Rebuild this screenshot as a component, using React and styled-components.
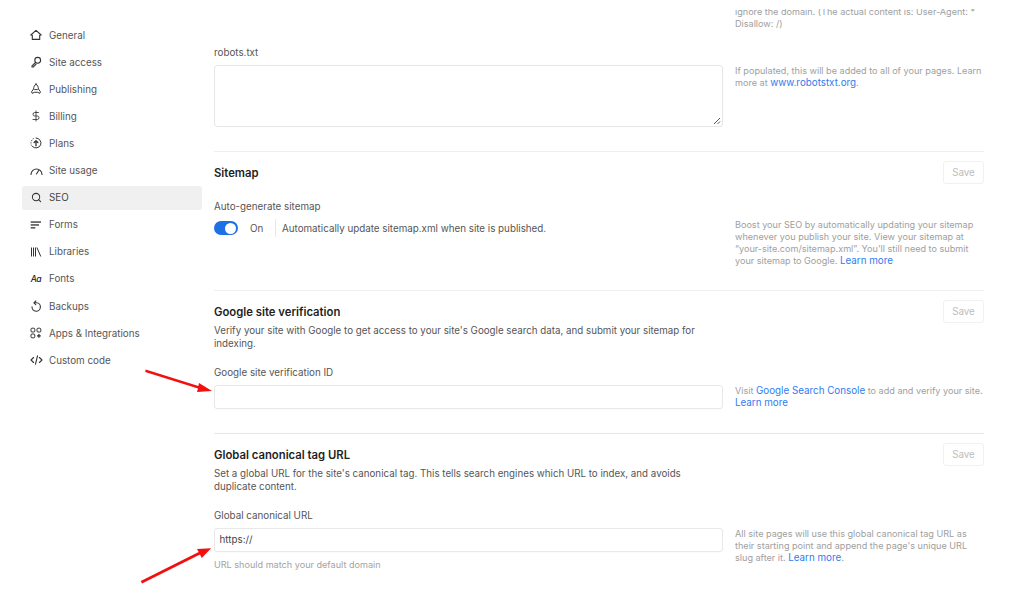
import React from 'react';
import styled, { createGlobalStyle } from 'styled-components';
import { DollarSign, Search } from 'lucide-react';

const GlobalStyle = createGlobalStyle`
  html, body {
    margin: 0;
    padding: 0;
    background: #fff;
  }
  body {
    font-family: Inter, "Liberation Sans", sans-serif;
    font-size: 9.8px;
    color: #4a4a4a;
  }
`;

const Page = styled.div`
  position: relative;
  width: 1012px;
  height: 610px;
  overflow: hidden;
  display: flex;
  background: #fff;
`;

const Sidebar = styled.nav`
  width: 180px;
  margin-left: 22px;
  padding-top: 23px;
  display: flex;
  flex-direction: column;
  gap: 3.12px;
  flex-shrink: 0;
`;

const NavItem = styled.div`
  height: 24px;
  display: flex;
  align-items: center;
  gap: 8px;
  padding-left: 9px;
  border-radius: 3px;
  color: ${props => (props.$active ? '#444' : '#555')};
  background: ${props => (props.$active ? '#f0f0f0' : 'transparent')};
`;

const NavIcon = styled.span`
  width: 10px;
  height: 12px;
  display: flex;
  align-items: center;
  justify-content: center;
  color: #333;

  svg {
    flex-shrink: 0;
  }
`;

const FontGlyph = styled.span`
  font-size: 8.6px;
  font-weight: 500;
  font-style: italic;
  letter-spacing: -0.5px;
  color: #222;
  white-space: nowrap;
`;

const Main = styled.main`
  margin-left: 12px;
  width: 770px;
  padding-top: 9px;
  display: flex;
  flex-direction: column;
`;

const Section = styled.section`
  padding-bottom: ${props => props.$bottom || 23.5}px;
  border-bottom: 1px solid ${props => props.$line || '#efefef'};

  &:last-child {
    border-bottom: none;
  }
`;

const TitleRow = styled.div`
  display: flex;
  justify-content: space-between;
  align-items: flex-start;
  height: 23.5px;
  margin-top: 9px;
`;

const Title = styled.h2`
  margin: 0;
  font-size: 11.3px;
  line-height: 25px;
  font-weight: 600;
  color: #1f1f1f;
`;

const SaveButton = styled.button`
  width: 41px;
  height: 23.5px;
  padding: 0;
  background: #fff;
  border: 1px solid #f1f1f1;
  border-radius: 3px;
  font: inherit;
  color: #bdbdbd;
`;

const Description = styled.p`
  width: 490px;
  margin: 1px 0 0;
  font-size: 9.75px;
  line-height: 13.3px;
  color: #555;
`;

const FieldRow = styled.div`
  display: grid;
  grid-template-columns: 509px 249px;
  column-gap: 12px;
  margin-top: ${props => props.$top || 15}px;
`;

const Label = styled.div`
  line-height: 13px;
  margin-bottom: 6.5px;
  color: #555;
`;

const Note = styled.p`
  margin: 19px 0 0;
  line-height: 12px;
  color: #a0a0a0;
  font-size: 9.1px;
`;

const ClippedNote = styled.div`
  height: 21px;
  margin-left: 521px;
  width: 249px;
  overflow: hidden;
  display: flex;
  flex-direction: column;
  justify-content: flex-end;
  line-height: 12px;
  color: #a0a0a0;
  font-size: 9.1px;
  white-space: nowrap;
`;

const Link = styled.a`
  color: #2f7bf0;
  font-size: 9.8px;
`;

const TextArea = styled.div`
  position: relative;
  height: 62px;
  box-sizing: border-box;
  border: 1px solid #e6e6e6;
  border-radius: 3px;
`;

const ResizeGrip = styled.svg`
  position: absolute;
  right: 1px;
  bottom: 1px;
`;

const Input = styled.div`
  height: 24px;
  box-sizing: border-box;
  border: 1px solid #e8e8e8;
  border-radius: 3px;
  padding-left: 4.5px;
  line-height: 22px;
  color: #444;
  box-shadow: 0 1px 1px rgba(0, 0, 0, 0.02);
`;

const Helper = styled.div`
  margin-top: 7px;
  line-height: 12px;
  font-size: 9.1px;
  color: #a3a3a3;
`;

const ToggleRow = styled.div`
  display: flex;
  align-items: center;
  height: 18px;
`;

const Switch = styled.div`
  width: 24px;
  height: 14px;
  border-radius: 7px;
  background: #1f6fe5;
  display: flex;
  align-items: center;
  justify-content: flex-end;
  padding-right: 2px;
  box-sizing: border-box;
`;

const Knob = styled.div`
  width: 11px;
  height: 11px;
  border-radius: 50%;
  background: #fff;
`;

const ToggleState = styled.span`
  width: 25px;
  margin-left: 12px;
  color: #555;
`;

const ToggleText = styled.span`
  height: 18px;
  line-height: 20px;
  padding-left: 6px;
  border-left: 1px solid #e8e8e8;
  color: #555;
`;

const Arrow = styled.svg`
  position: absolute;
  left: 0;
  top: 0;
  pointer-events: none;
`;

const HomeIcon = () => (
  <svg width="12" height="12" viewBox="0 0 12 12" fill="none" stroke="currentColor" strokeWidth="1.1" strokeLinejoin="round">
    <path d="M.8 6 6 1.4 11.200 6 9.700 6.300V10.400H2.300V6.300z" />
  </svg>
);

const KeyIcon = () => (
  <svg width="12" height="12" viewBox="0 0 12 12" fill="none" stroke="currentColor" strokeWidth="1.1" strokeLinecap="round" strokeLinejoin="round">
    <circle cx="7.700" cy="4.300" r="2.900" />
    <path d="M5.500 6.300 2 9.800V11h1.600l.3-1.200 1.100-.2.200-1.100 1-.4" />
  </svg>
);

const RocketIcon = () => (
  <svg width="12" height="12" viewBox="0 0 12 12" fill="none" stroke="currentColor" strokeWidth="1" strokeLinejoin="round" strokeLinecap="round">
    <path d="M6 1c1.600 1.300 2.400 3 2.400 5l2 2.700-.6 1.700-2.100-1.100H4.300l-2.100 1.100-.6-1.700 2-2.700c0-2 .8-3.700 2.400-5z" />
    <path d="M4.700 6.600h2.600" />
  </svg>
);

const PlansIcon = () => (
  <svg width="12" height="12" viewBox="0 0 12 12" fill="none" stroke="currentColor" strokeWidth="1" strokeLinecap="round" strokeLinejoin="round">
    <path d="M6 1a5 5 0 1 1-3.500 8.600" />
    <path d="M1 6v-.3M1.500 3.800l.2-.3M3 1.900l.3-.2M1.300 8l.1.200" />
    <path d="M6 8.800V3.700M4.100 5.500 6 3.600l1.900 1.900" strokeWidth="1.300" />
  </svg>
);

const GaugeIcon = () => (
  <svg width="13" height="12" viewBox="0 0 13 12" fill="none" stroke="currentColor" strokeWidth="1.100" strokeLinecap="round">
    <path d="M1 9.500a5.500 5.500 0 0 1 11 0" />
    <path d="M6.500 9 8.800 5.200" />
  </svg>
);

const FormsIcon = () => (
  <svg width="12" height="12" viewBox="0 0 12 12" fill="#333">
    <rect x=".7" y="2.400" width="10.300" height="1.300" />
    <rect x=".7" y="5.300" width="8.300" height="1.300" />
    <rect x=".7" y="8.200" width="4.600" height="1.300" />
  </svg>
);

const LibraryIcon = () => (
  <svg width="12" height="12" viewBox="0 0 12 12" fill="none" stroke="currentColor" strokeWidth="1">
    <path d="M1.500 1.500v9M3.500 1.500v9M5.500 1.500v9M6.900 1.500l3.900 9" />
  </svg>
);

const BackupIcon = () => (
  <svg width="12" height="12" viewBox="0 0 12 12" fill="none" stroke="currentColor" strokeWidth="1.100" strokeLinecap="round" strokeLinejoin="round">
    <path d="M4.200 2.800H6.500a4.200 4.200 0 1 1-4.500 4" />
    <path d="M5.800 1 4 2.800l1.800 1.800" />
  </svg>
);

const AppsIcon = () => (
  <svg width="12" height="12" viewBox="0 0 12 12" fill="none" stroke="currentColor" strokeWidth="1">
    <rect x="1" y="1.200" width="3.800" height="3.800" rx="1" />
    <rect x="7" y="1.200" width="3.800" height="3.800" rx="1" />
    <rect x="1" y="7" width="3.800" height="3.800" rx="1" />
    <path d="M8.900 7v3.800M7 8.900h3.800" strokeWidth="1.300" />
  </svg>
);

const CodeIcon = () => (
  <svg width="13" height="12" viewBox="0 0 13 12" fill="none" stroke="currentColor" strokeWidth="1.100" strokeLinecap="round" strokeLinejoin="round">
    <path d="M3.600 3.500 1 6l2.600 2.500M9.400 3.500 12 6 9.400 8.500M7.500 1.800 5.500 10.200" />
  </svg>
);

const navItems = [
  { name: 'General', icon: <HomeIcon /> },
  { name: 'Site access', icon: <KeyIcon /> },
  { name: 'Publishing', icon: <RocketIcon /> },
  { name: 'Billing', icon: <DollarSign size={12} strokeWidth={1.7} /> },
  { name: 'Plans', icon: <PlansIcon /> },
  { name: 'Site usage', icon: <GaugeIcon /> },
  { name: 'SEO', icon: <Search size={11} strokeWidth={2.2} />, active: true },
  { name: 'Forms', icon: <FormsIcon /> },
  { name: 'Libraries', icon: <LibraryIcon /> },
  { name: 'Fonts', icon: <FontGlyph>Aa</FontGlyph> },
  { name: 'Backups', icon: <BackupIcon /> },
  { name: 'Apps & Integrations', icon: <AppsIcon /> },
  { name: 'Custom code', icon: <CodeIcon /> },
];

const App = () => (
  <Page>
    <GlobalStyle />
    <Sidebar>
      {navItems.map(item => (
        <NavItem key={item.name} $active={item.active}>
          <NavIcon>{item.icon}</NavIcon>
          {item.name}
        </NavItem>
      ))}
    </Sidebar>

    <Main>
      <ClippedNote>
        <span>ignore the domain. (The actual content is: User-Agent: *</span>
        <span>Disallow: /)</span>
      </ClippedNote>

      <Section>
        <FieldRow $top={15.5}>
          <div>
            <Label>robots.txt</Label>
            <TextArea>
              <ResizeGrip width="8" height="8" viewBox="0 0 8 8" stroke="#444" strokeWidth="0.9">
                <path d="M1 7 7 1M4.500 7 7 4.500" />
              </ResizeGrip>
            </TextArea>
          </div>
          <Note>
            If populated, this will be added to all of your pages. Learn more at{' '}
            <Link>www.robotstxt.org</Link>.
          </Note>
        </FieldRow>
      </Section>

      <Section $bottom={23}>
        <TitleRow>
          <Title>Sitemap</Title>
          <SaveButton>Save</SaveButton>
        </TitleRow>
        <FieldRow $top={15.5}>
          <div>
            <Label>Auto-generate sitemap</Label>
            <ToggleRow>
              <Switch><Knob /></Switch>
              <ToggleState>On</ToggleState>
              <ToggleText>Automatically update sitemap.xml when site is published.</ToggleText>
            </ToggleRow>
          </div>
          <Note>
            Boost your SEO by automatically updating your sitemap whenever you publish your site. View your sitemap at
            “your-site.com/sitemap.xml”. You'll still need to submit your sitemap to Google. <Link>Learn more</Link>
          </Note>
        </FieldRow>
      </Section>

      <Section $line="#e6e6e6">
        <TitleRow>
          <Title>Google site verification</Title>
          <SaveButton>Save</SaveButton>
        </TitleRow>
        <Description>
          Verify your site with Google to get access to your site's Google search data, and submit your sitemap for indexing.
        </Description>
        <FieldRow>
          <div>
            <Label>Google site verification ID</Label>
            <Input />
          </div>
          <Note>
            Visit <Link>Google Search Console</Link> to add and verify your site. <Link>Learn more</Link>
          </Note>
        </FieldRow>
      </Section>

      <Section>
        <TitleRow>
          <Title>Global canonical tag URL</Title>
          <SaveButton>Save</SaveButton>
        </TitleRow>
        <Description>
          Set a global URL for the site's canonical tag. This tells search engines which URL to index, and avoids duplicate content.
        </Description>
        <FieldRow>
          <div>
            <Label>Global canonical URL</Label>
            <Input>https://</Input>
            <Helper>URL should match your default domain</Helper>
          </div>
          <Note>
            All site pages will use this global canonical tag URL as their starting point and append the page's unique URL
            slug after it. <Link>Learn more</Link>.
          </Note>
        </FieldRow>
      </Section>
    </Main>

    <Arrow width="1012" height="610" viewBox="0 0 1012 610">
      <g fill="#f01010">
        <path d="M145.700 369.600 145.200 372 198 388.600 197 392 212 391 199 383 198.400 386z" />
        <path d="M140.800 581 142 583.500 200 554.500 201.700 558 211.200 548.300 197 549 198.700 552z" />
      </g>
    </Arrow>
  </Page>
);

export default App;
